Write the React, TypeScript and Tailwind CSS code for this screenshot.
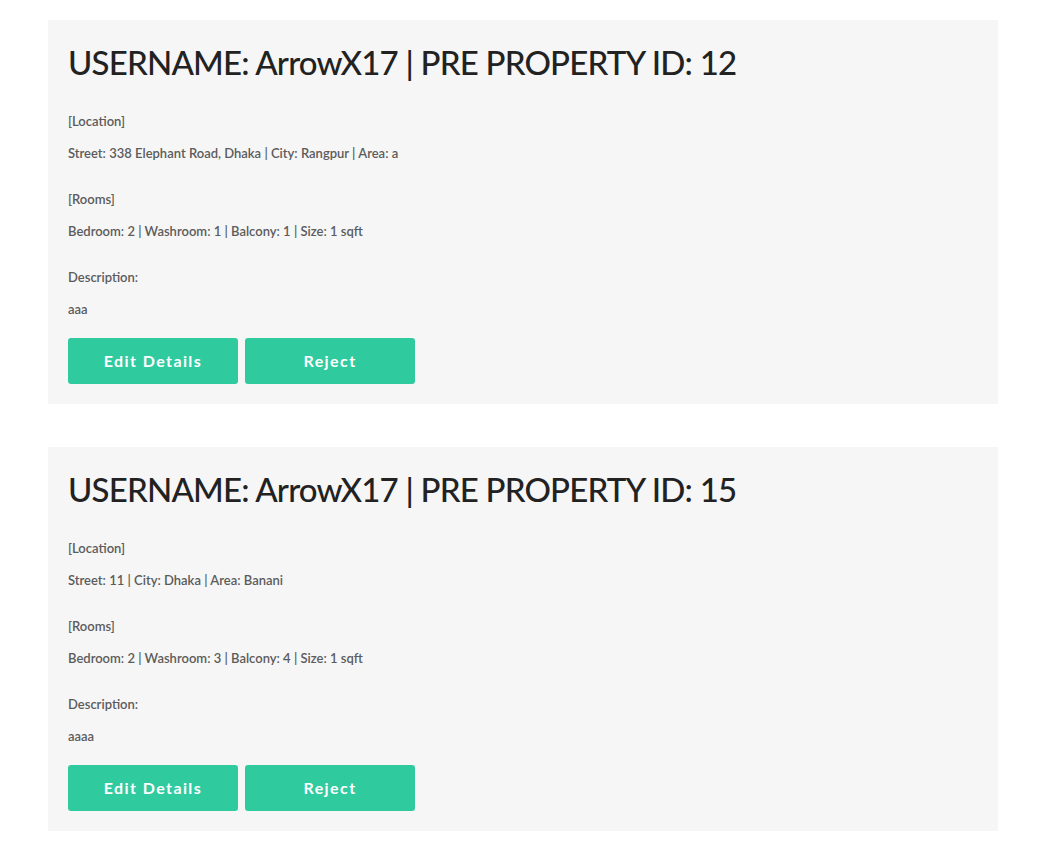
import React from 'react';

type Listing = {
  id: number;
  username: string;
  street: string;
  city: string;
  area: string;
  bedroom: number;
  washroom: number;
  balcony: number;
  size: number;
  description: string;
};

const listings: Listing[] = [
  {
    id: 12,
    username: 'ArrowX17',
    street: '338 Elephant Road, Dhaka',
    city: 'Rangpur',
    area: 'a',
    bedroom: 2,
    washroom: 1,
    balcony: 1,
    size: 1,
    description: 'aaa',
  },
  {
    id: 15,
    username: 'ArrowX17',
    street: '11',
    city: 'Dhaka',
    area: 'Banani',
    bedroom: 2,
    washroom: 3,
    balcony: 4,
    size: 1,
    description: 'aaaa',
  },
];

function Line({ children, className = '' }: { children: React.ReactNode; className?: string }) {
  return <p className={`text-[13px] leading-[20px] font-semibold text-[#5c5c5c] ${className}`}>{children}</p>;
}

function ListingCard({ item }: { item: Listing }) {
  return (
    <div className="bg-[#f6f6f6] px-5 pt-5 pb-5">
      <h1 className="text-[33px] leading-[44px] font-medium tracking-[-0.8px] text-[#222]">
        USERNAME: {item.username} | PRE PROPERTY ID: {item.id}
      </h1>

      <Line className="mt-[27px]">[Location]</Line>
      <Line className="mt-[12px]">
        Street: {item.street} | City: {item.city} | Area: {item.area}
      </Line>

      <Line className="mt-[26px]">[Rooms]</Line>
      <Line className="mt-[12px]">
        Bedroom: {item.bedroom} | Washroom: {item.washroom} | Balcony: {item.balcony} | Size: {item.size} sqft
      </Line>

      <Line className="mt-[26px]">Description:</Line>
      <Line className="mt-[12px]">{item.description}</Line>

      <div className="mt-[19px] flex gap-[7px]">
        <button className="w-[170px] h-[46px] rounded-[3px] bg-[#30ca9f] text-white font-bold text-[16px] tracking-[1.4px]">
          Edit Details
        </button>
        <button className="w-[170px] h-[46px] rounded-[3px] bg-[#30ca9f] text-white font-bold text-[16px] tracking-[1.4px]">
          Reject
        </button>
      </div>
    </div>
  );
}

export default function App() {
  return (
    <div className="min-h-[867px] bg-white pt-5" style={{ fontFamily: 'Lato, "Noto Sans", sans-serif' }}>
      <div className="ml-[48px] w-[950px] flex flex-col gap-[43px]">
        {listings.map((item) => (
          <ListingCard key={item.id} item={item} />
        ))}
      </div>
    </div>
  );
}
